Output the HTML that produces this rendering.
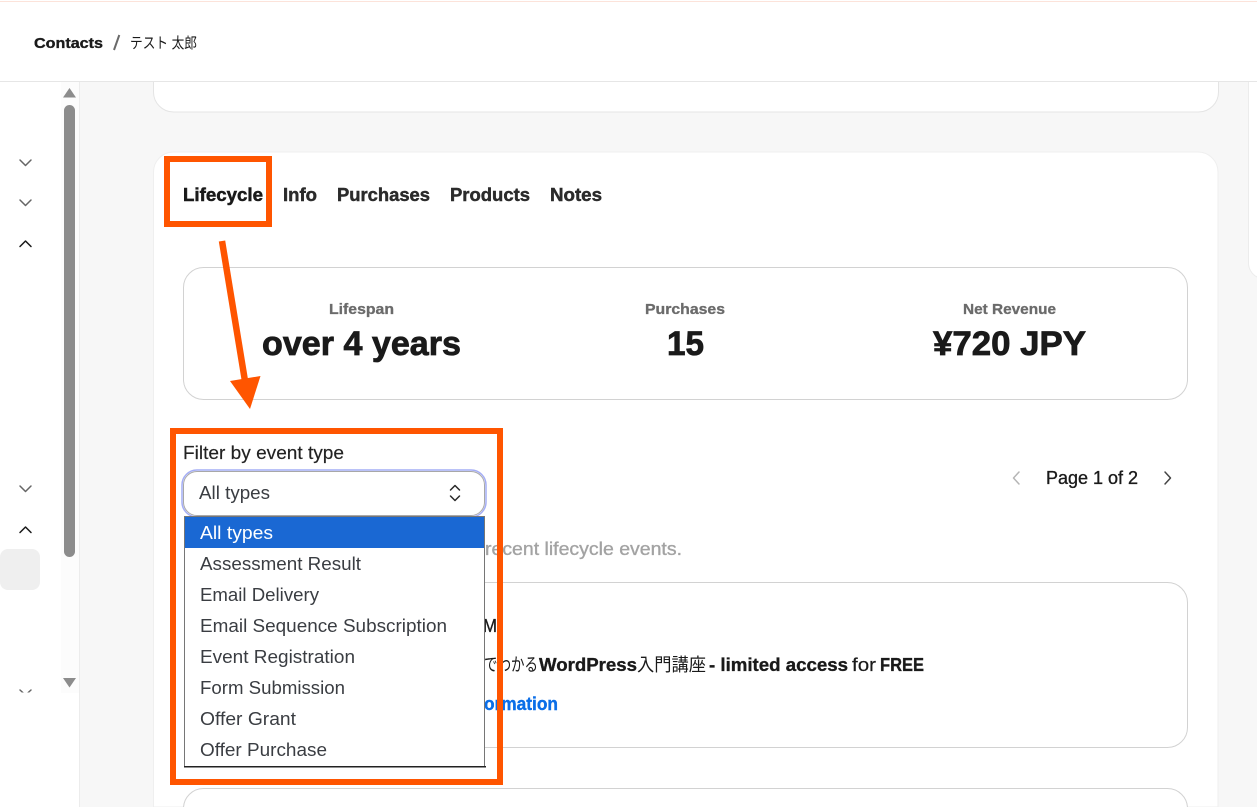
<!DOCTYPE html>
<html lang="en"><head><meta charset="utf-8"><title>Contact</title>
<style>
html,body{margin:0;padding:0;width:1257px;height:807px;overflow:hidden;background:#f7f7f7}
svg{display:block;position:absolute;left:0;top:0}
text{font-family:"Liberation Sans","Noto Sans CJK JP",sans-serif;fill:#1a1a1a}
.b{font-weight:700;stroke:#1a1a1a;stroke-width:.35}
.g{font-weight:700;fill:#6b6b6b;stroke:#6b6b6b;stroke-width:.3}
.h{font-weight:700;stroke:#1a1a1a;stroke-width:.8}
.t{font-weight:700;fill:#2b2b2b;stroke:#2b2b2b;stroke-width:.45}
.o{fill:#3a3d42}
</style></head><body>
<svg width="1257" height="807" viewBox="0 0 1257 807" xmlns="http://www.w3.org/2000/svg">
<rect width="1257" height="807" fill="#f7f7f7"/>
<!-- sidebar -->
<rect x="0" y="81" width="79" height="726" fill="#fff"/>
<rect x="79" y="81" width="1" height="726" fill="#ececec"/>
<rect x="61" y="82" width="18" height="611" fill="#fcfcfc"/>
<rect x="0" y="549" width="40" height="41" rx="8" fill="#efefef"/>
<rect x="64" y="105" width="11" height="452" rx="5.5" fill="#8c8c8c"/>
<path d="M63 97.500L69.500 88L76 97.500Z" fill="#8c8c8c"/>
<path d="M63 678L76 678L69.500 687.500Z" fill="#8c8c8c"/>
<g fill="none" stroke-width="1.500" stroke-linecap="round" stroke-linejoin="round">
<path d="M20 160L25.500 165.500L31 160" stroke="#666"/>
<path d="M20 200L25.500 205.500L31 200" stroke="#666"/>
<path d="M20 246.500L25.500 241L31 246.500" stroke="#1a1a1a"/>
<path d="M20 486L25.500 491.500L31 486" stroke="#666"/>
<path d="M20 532.500L25.500 527L31 532.500" stroke="#1a1a1a"/>
<path d="M20 690L25.500 695L31 690" stroke="#666"/>
</g>
<rect x="0" y="692.500" width="60" height="114.500" fill="#fff"/>
<!-- top card -->
<rect x="153.500" y="40" width="1065" height="72" rx="20" fill="#fff" stroke="#e4e4e4" stroke-width="1"/>
<!-- right panel -->
<path d="M1257 278L1264 278M1257 278H1264" fill="none"/>
<path d="M1257 40H1248.500V262A16 16 0 0 0 1257 277" fill="#fff" stroke="#ececec"/>
<!-- main card -->
<path d="M153.500 807V172A20 20 0 0 1 173.500 152H1198A20 20 0 0 1 1218 172V807Z" fill="#fff" stroke="#efefef" stroke-width="1"/>
<!-- header -->
<rect x="0" y="0" width="1257" height="81" fill="#fff"/>
<rect x="0" y="1" width="1257" height="1" fill="#fce3da"/>
<rect x="0" y="81" width="1257" height="1" fill="#e6e6e6"/>
<text class="b" x="34" y="48" font-size="14.500" textLength="69" lengthAdjust="spacingAndGlyphs">Contacts</text>
<path d="M119.300 35L114 50" fill="none" stroke="#6a6a6a" stroke-width="2"/>
<text x="130" y="48" font-size="15" textLength="67" lengthAdjust="spacingAndGlyphs">テスト 太郎</text>
<!-- tabs -->
<text class="b" x="183" y="201" font-size="18.500" textLength="80" lengthAdjust="spacingAndGlyphs" style="stroke-width:.5">Lifecycle</text>
<text class="t" x="283" y="201" font-size="18.500" textLength="34" lengthAdjust="spacingAndGlyphs">Info</text>
<text class="t" x="337" y="201" font-size="18.500" textLength="93" lengthAdjust="spacingAndGlyphs">Purchases</text>
<text class="t" x="450" y="201" font-size="18.500" textLength="80" lengthAdjust="spacingAndGlyphs">Products</text>
<text class="t" x="550" y="201" font-size="18.500" textLength="52" lengthAdjust="spacingAndGlyphs">Notes</text>
<!-- stats -->
<rect x="183.500" y="267.500" width="1004" height="132" rx="20" fill="#fff" stroke="#d2d2d2"/>
<text class="g" x="329" y="314" font-size="14.500" textLength="65" lengthAdjust="spacingAndGlyphs">Lifespan</text>
<text class="g" x="645" y="314" font-size="14.500" textLength="80" lengthAdjust="spacingAndGlyphs">Purchases</text>
<text class="g" x="963" y="314" font-size="14.500" textLength="93" lengthAdjust="spacingAndGlyphs">Net Revenue</text>
<text class="h" x="262" y="355" font-size="34" textLength="199" lengthAdjust="spacingAndGlyphs">over 4 years</text>
<text class="h" x="667" y="355" font-size="34" textLength="37" lengthAdjust="spacingAndGlyphs">15</text>
<text class="h" x="933" y="355" font-size="34" textLength="153" lengthAdjust="spacingAndGlyphs">¥720 JPY</text>
<!-- pagination -->
<path d="M1019 472L1013.500 478L1019 484" fill="none" stroke="#b5b5b5" stroke-width="1.500" stroke-linecap="round" stroke-linejoin="round"/>
<text x="1046" y="484" font-size="18.500" textLength="92" lengthAdjust="spacingAndGlyphs" stroke="#1a1a1a" stroke-width="0.350">Page 1 of 2</text>
<path d="M1165 472L1170.500 478L1165 484" fill="none" stroke="#444" stroke-width="1.500" stroke-linecap="round" stroke-linejoin="round"/>
<!-- text behind -->
<text x="485" y="555" font-size="18.500" textLength="197" lengthAdjust="spacingAndGlyphs" stroke="#a3a3a3" stroke-width="0.350" style="fill:#a3a3a3">recent lifecycle events.</text>
<rect x="183.500" y="582.500" width="1004" height="165" rx="20" fill="#fff" stroke="#d2d2d2"/>
<path d="M183.500 807V808.500A20 20 0 0 1 203.500 788.500H1167.500A20 20 0 0 1 1187.500 808.500V807" fill="#fff" stroke="#d2d2d2"/>
<text x="483" y="632" font-size="18.500" textLength="14" lengthAdjust="spacingAndGlyphs" stroke="#1a1a1a" stroke-width="0.350">M</text>
<text x="484" y="671" font-size="18" textLength="54" lengthAdjust="spacingAndGlyphs">でわかる</text>
<text class="b" x="539" y="671" font-size="18.500" textLength="98" lengthAdjust="spacingAndGlyphs">WordPress</text>
<text x="637" y="671" font-size="18" textLength="69" lengthAdjust="spacingAndGlyphs">入門講座</text>
<text class="b" x="709" y="671" font-size="18.500" textLength="139" lengthAdjust="spacingAndGlyphs">- limited access</text>
<text x="852" y="671" font-size="18.500" textLength="24" lengthAdjust="spacingAndGlyphs" stroke="#1a1a1a" stroke-width=".2">for</text>
<text class="b" x="880" y="671" font-size="18.500" textLength="44" lengthAdjust="spacingAndGlyphs">FREE</text>
<text x="484" y="710" font-size="18.500" font-weight="700" textLength="74" lengthAdjust="spacingAndGlyphs" stroke="#0a6ee8" stroke-width=".4" style="fill:#0a6ee8">ormation</text>
<!-- callout 2 -->
<rect x="176" y="434" width="308" height="82" fill="#fff"/>
<rect x="176" y="516" width="8" height="263" fill="#fff"/>
<rect x="176" y="767" width="321" height="12" fill="#fff"/>
<text x="183" y="459" font-size="18.500" textLength="161" lengthAdjust="spacingAndGlyphs" stroke="#222" stroke-width=".15" style="fill:#222">Filter by event type</text>
<rect x="182" y="470" width="304" height="47" rx="15" fill="#fff" stroke="#a4adf5" stroke-width="1.500"/>
<rect x="183.500" y="471.500" width="301" height="44" rx="13.500" fill="#fff" stroke="#a8a8a8" stroke-width="1"/>
<text x="199" y="499" font-size="18.500" textLength="71" lengthAdjust="spacingAndGlyphs" class="o">All types</text>
<path d="M450.500 490L455 485.500L459.500 490M450.500 496L455 500.500L459.500 496" fill="none" stroke="#2a2a2a" stroke-width="1.500" stroke-linecap="round" stroke-linejoin="round"/>
<!-- dropdown -->
<rect x="184.500" y="516.500" width="300" height="250" fill="#fff" stroke="#767676"/>
<rect x="184" y="766" width="302" height="1.500" fill="#222"/>
<rect x="185" y="517" width="299" height="31" fill="#1a68d3"/>
<text x="200" y="539" font-size="18.500" textLength="73" lengthAdjust="spacingAndGlyphs" style="fill:#fff">All types</text>
<text x="200" y="570" font-size="18.500" textLength="161" lengthAdjust="spacingAndGlyphs" class="o">Assessment Result</text>
<text x="200" y="601" font-size="18.500" textLength="119" lengthAdjust="spacingAndGlyphs" class="o">Email Delivery</text>
<text x="200" y="632" font-size="18.500" textLength="247" lengthAdjust="spacingAndGlyphs" class="o">Email Sequence Subscription</text>
<text x="200" y="663" font-size="18.500" textLength="155" lengthAdjust="spacingAndGlyphs" class="o">Event Registration</text>
<text x="200" y="694" font-size="18.500" textLength="145" lengthAdjust="spacingAndGlyphs" class="o">Form Submission</text>
<text x="200" y="725" font-size="18.500" textLength="96" lengthAdjust="spacingAndGlyphs" class="o">Offer Grant</text>
<text x="200" y="756" font-size="18.500" textLength="127" lengthAdjust="spacingAndGlyphs" class="o">Offer Purchase</text>
<rect x="173" y="431" width="327" height="351" fill="none" stroke="#ff5500" stroke-width="6"/>
<!-- callout 1 -->
<rect x="167" y="159" width="102" height="65" fill="none" stroke="#ff5500" stroke-width="6"/>
<!-- arrow -->
<path d="M222 241L245 381" fill="none" stroke="#ff5500" stroke-width="6.500"/>
<path d="M230 381L260.500 376L250 409Z" fill="#ff5500"/>
</svg>
</body></html>
